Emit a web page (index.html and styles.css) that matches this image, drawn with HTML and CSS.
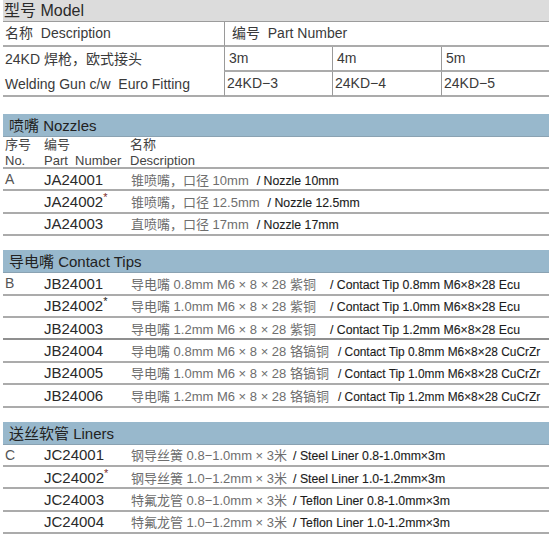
FILE: index.html
```html
<!DOCTYPE html>
<html lang="zh">
<head>
<meta charset="utf-8">
<title>24KD</title>
<link rel="stylesheet" href="styles.css">
</head>
<body>
<div class="page">
  <section class="model">
    <div class="model-title">型号 Model</div>
    <div class="model-grid">
      <div class="cell desc-head">名称&nbsp; Description</div>
      <div class="cell pn-head vl">编号&nbsp; Part Number</div>
      <div class="cell desc-cell"><div>24KD 焊枪，欧式接头</div><div>Welding Gun c/w&nbsp; Euro Fitting</div></div>
      <div class="cell vl len">3m</div>
      <div class="cell vl len">4m</div>
      <div class="cell vl len">5m</div>
      <div class="cell vl">24KD−3</div>
      <div class="cell vl">24KD−4</div>
      <div class="cell vl">24KD−5</div>
    </div>
  </section>

  <section class="group nozzles">
    <div class="group-title">喷嘴 Nozzles</div>
    <div class="row sub">
      <div class="no">序号<br>No.</div>
      <div>编号<br>Part&nbsp; Number</div>
      <div>名称<br>Description</div>
    </div>
    <div class="row"><div class="no">A</div><div class="pn">JA24001</div><div class="ds"><span class="cn">锥喷嘴，口径 10mm</span><span class="en n1">/ Nozzle 10mm</span></div></div>
    <div class="row"><div class="no"></div><div class="pn">JA24002<sup class="star red">*</sup></div><div class="ds"><span class="cn">锥喷嘴，口径 12.5mm</span><span class="en n1">/ Nozzle 12.5mm</span></div></div>
    <div class="row"><div class="no"></div><div class="pn">JA24003</div><div class="ds"><span class="cn">直喷嘴，口径 17mm</span><span class="en n1">/ Nozzle 17mm</span></div></div>
  </section>

  <section class="group">
    <div class="group-title">导电嘴 Contact Tips</div>
    <div class="row"><div class="no">B</div><div class="pn">JB24001</div><div class="ds"><span class="cn">导电嘴 0.8mm M6 × 8 × 28 紫铜</span><span class="en t1">/ Contact Tip 0.8mm M6×8×28 Ecu</span></div></div>
    <div class="row"><div class="no"></div><div class="pn">JB24002<sup class="star">*</sup></div><div class="ds"><span class="cn">导电嘴 1.0mm M6 × 8 × 28 紫铜</span><span class="en t1">/ Contact Tip 1.0mm M6×8×28 Ecu</span></div></div>
    <div class="row strong"><div class="no"></div><div class="pn">JB24003</div><div class="ds"><span class="cn">导电嘴 1.2mm M6 × 8 × 28 紫铜</span><span class="en t1">/ Contact Tip 1.2mm M6×8×28 Ecu</span></div></div>
    <div class="row"><div class="no"></div><div class="pn">JB24004</div><div class="ds"><span class="cn">导电嘴 0.8mm M6 × 8 × 28 铬镐铜</span><span class="en t2">/ Contact Tip 0.8mm M6×8×28 CuCrZr</span></div></div>
    <div class="row"><div class="no"></div><div class="pn">JB24005</div><div class="ds"><span class="cn">导电嘴 1.0mm M6 × 8 × 28 铬镐铜</span><span class="en t2">/ Contact Tip 1.0mm M6×8×28 CuCrZr</span></div></div>
    <div class="row"><div class="no"></div><div class="pn">JB24006</div><div class="ds"><span class="cn">导电嘴 1.2mm M6 × 8 × 28 铬镐铜</span><span class="en t2">/ Contact Tip 1.2mm M6×8×28 CuCrZr</span></div></div>
  </section>

  <section class="group">
    <div class="group-title">送丝软管 Liners</div>
    <div class="row"><div class="no">C</div><div class="pn">JC24001</div><div class="ds"><span class="cn">钢导丝簧 0.8−1.0mm × 3米</span><span class="en l1">/ Steel Liner 0.8-1.0mm×3m</span></div></div>
    <div class="row"><div class="no"></div><div class="pn">JC24002<sup class="star red">*</sup></div><div class="ds"><span class="cn">钢导丝簧 1.0−1.2mm × 3米</span><span class="en l1">/ Steel Liner 1.0-1.2mm×3m</span></div></div>
    <div class="row"><div class="no"></div><div class="pn">JC24003</div><div class="ds"><span class="cn">特氟龙管 0.8−1.0mm × 3米</span><span class="en l1">/ Teflon Liner 0.8-1.0mm×3m</span></div></div>
    <div class="row"><div class="no"></div><div class="pn">JC24004</div><div class="ds"><span class="cn">特氟龙管 1.0−1.2mm × 3米</span><span class="en l1">/ Teflon Liner 1.0-1.2mm×3m</span></div></div>
  </section>
</div>
</body>
</html>
```

FILE: styles.css
```css
* {
  box-sizing: border-box;
  margin: 0;
  padding: 0;
}

body {
  margin: 0;
  background: #ffffff;
  font-family: "Liberation Sans", "Noto Sans CJK SC", sans-serif;
  color: #333333;
}

.page {
  width: 546px;
  margin-left: 3px;
}

.model-title {
  height: 22px;
  background: #dcdcdc;
  border-bottom: 1px solid #9c9c9c;
  font-size: 16px;
  line-height: 21px;
  padding-left: 1px;
  color: #2a2a2a;
}

.model-grid {
  display: grid;
  grid-template-columns: 221px 108px 109px 108px;
  grid-template-rows: 25px 25px 25px;
  font-size: 14px;
  color: #3a3a3a;
}

.cell {
  border-bottom: 2px solid #ababab;
  line-height: 23px;
  padding-left: 2px;
  white-space: nowrap;
}

.vl {
  border-left: 1px solid #9a9a9a;
}

.desc-head {
  grid-column: 1;
  grid-row: 1;
}

.pn-head {
  grid-column: 2 / 5;
  grid-row: 1;
  padding-left: 7px;
}

.desc-cell {
  grid-column: 1;
  grid-row: 2 / 4;
  line-height: 24.5px;
}

.len {
  padding-left: 4px;
}

.group {
  margin-top: 14px;
}

.group.nozzles {
  margin-top: 17px;
}

.group-title {
  height: 23px;
  background: #98b8cc;
  border-bottom: 1px solid #8aa2b2;
  font-size: 15px;
  line-height: 23px;
  padding-left: 6px;
  color: #222222;
}

.row {
  display: grid;
  grid-template-columns: 41px 86px 1fr;
  height: 22.4px;
  border-bottom: 2px solid #ababab;
  align-items: center;
  white-space: nowrap;
}

.row.strong {
  border-bottom-color: #8f8f8f;
}

.row.sub {
  height: 32px;
  align-items: start;
  font-size: 13px;
  line-height: 16px;
  color: #444444;
}

.no {
  padding-left: 2px;
  font-size: 14px;
  color: #555555;
}

.sub .no {
  font-size: 13px;
  color: #444444;
}

.pn {
  font-size: 15px;
  color: #2a2a2a;
}

.star {
  font-size: 11px;
  vertical-align: 6px;
  line-height: 0;
  color: #222222;
}

.star.red {
  color: #7a2b2b;
}

.ds {
  padding-left: 1px;
}

.cn {
  font-size: 13px;
  color: #6e6e6e;
}

.en {
  font-size: 12.3px;
  color: #1c1c1c;
  -webkit-text-stroke: 0.12px #1c1c1c;
}

.en.n1 {
  margin-left: 8px;
}

.en.t1 {
  margin-left: 14px;
}

.en.t2 {
  margin-left: 9px;
  font-size: 11.9px;
}

.en.l1 {
  margin-left: 6px;
}
```
